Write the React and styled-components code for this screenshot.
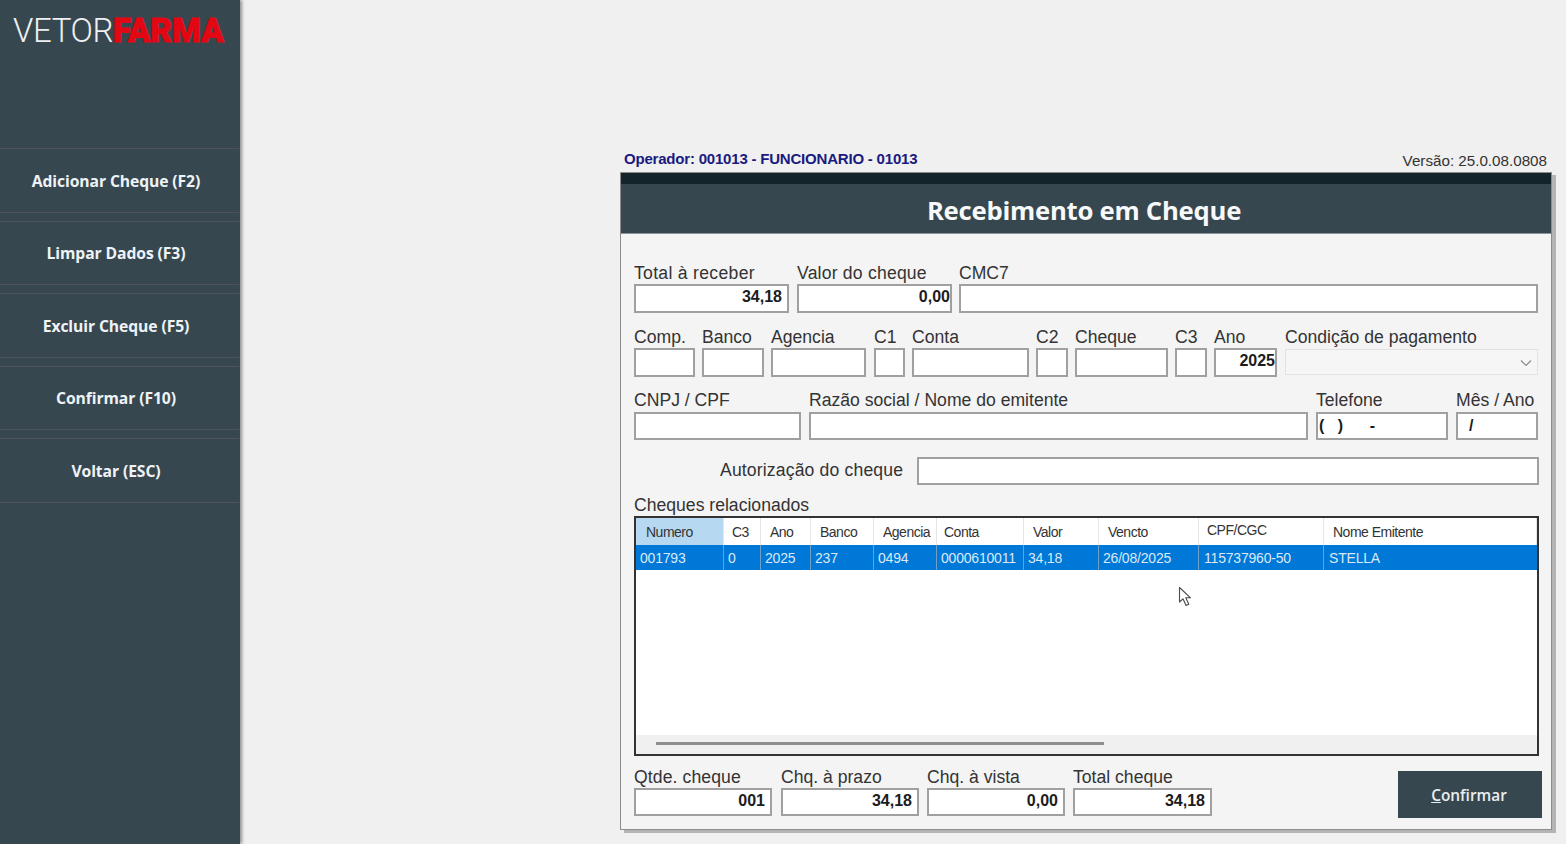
import React from 'react';
import styled, { createGlobalStyle } from 'styled-components';

const GlobalStyle = createGlobalStyle`
    html, body {
        margin: 0;
        padding: 0;
        height: 100%;
        overflow: hidden;
        background: #f0f0f0;
    }
`;

const Page = styled.div`
    position: relative;
    width: 1566px;
    height: 844px;
    overflow: hidden;
    background: #f0f0f0;
    font-family: "Liberation Sans", Arial, sans-serif;
`;

const Sidebar = styled.aside`
    position: absolute;
    left: 0;
    top: 0;
    width: 240px;
    height: 844px;
    background: #37474f;
    box-shadow: 2px 0 3px rgba(70, 70, 70, 0.55);
`;

const Logo = styled.div`
    position: absolute;
    left: 13px;
    top: 11px;
    display: flex;
    font-family: Roboto, sans-serif;
    font-size: 33px;
    line-height: 40px;
    white-space: nowrap;
`;

const LogoThin = styled.span`
    color: #eef0f1;
    font-weight: 300;
    letter-spacing: -0.4px;
`;

const LogoBold = styled.span`
    color: #e30613;
    font-weight: 900;
    letter-spacing: 0;
    -webkit-text-stroke: 1px #e30613;
`;

const SideMenu = styled.nav`
    position: absolute;
    left: 0;
    top: 148px;
    width: 239px;
    display: flex;
    flex-direction: column;
    gap: 8px;
`;

const SideButton = styled.div`
    display: flex;
    align-items: center;
    justify-content: center;
    padding: 1px 7px 0 0;
    box-sizing: border-box;
    height: 64.5px;
    border-top: 1px solid #4c5459;
    border-bottom: 1px solid #4c5459;
    color: #eef3f7;
    font-family: "Open Sans", sans-serif;
    font-size: 15.7px;
    font-weight: 700;
    letter-spacing: -0.1px;
`;

const Operator = styled.div`
    position: absolute;
    left: 624px;
    top: 150px;
    color: #1a1a80;
    font-size: 15px;
    line-height: 17px;
    font-weight: 700;
    letter-spacing: -0.2px;
`;

const Version = styled.div`
    position: absolute;
    right: 19px;
    top: 152px;
    color: #333;
    font-size: 15.2px;
    line-height: 17px;
`;

const Panel = styled.main`
    position: absolute;
    left: 620px;
    top: 172px;
    width: 932px;
    height: 658px;
    box-sizing: border-box;
    border: 1px solid #8c8c8c;
    background: #f4f4f5;
    box-shadow: 4px 3px 0 #b4b4b4;
`;

const TopBand = styled.div`
    height: 11px;
    background: #14242b;
`;

const Title = styled.h1`
    margin: 0;
    height: 50px;
    display: flex;
    align-items: center;
    justify-content: center;
    padding: 4px 4px 0 0;
    background: #37474f;
    border-bottom: 1px solid #8b9499;
    box-sizing: border-box;
    color: #f7f9fa;
    font-family: "Open Sans", sans-serif;
    font-size: 25.7px;
    font-weight: 700;
    letter-spacing: -0.25px;
`;

const Row = styled.div`
    position: absolute;
    left: 13px;
    top: ${props => props.$top}px;
    display: flex;
`;

const Field = styled.div`
    width: ${props => props.$w}px;
    margin-left: ${props => props.$ml || 0}px;
    flex: none;
`;

const Label = styled.div`
    height: 21px;
    line-height: 20px;
    color: #333;
    font-size: 17.6px;
    letter-spacing: ${props => props.$ls || 0}px;
    white-space: nowrap;
`;

const Input = styled.input`
    display: block;
    width: 100%;
    height: ${props => props.$h || 29}px;
    box-sizing: border-box;
    margin: ${props => props.$mt || 0}px 0 0;
    padding: 0 ${props => props.$pr ?? 2}px ${props => props.$pb ?? 3}px ${props => props.$pl ?? 2}px;
    border: 2px solid #a0a0a0;
    border-radius: 0;
    outline: none;
    background: #fff;
    color: #1c1c1c;
    font-family: "Liberation Sans", Arial, sans-serif;
    font-size: 16px;
    font-weight: 700;
    text-align: ${props => props.$align || 'left'};
    white-space: pre;
`;

const Combo = styled.div`
    position: relative;
    height: 26px;
    margin-top: 1px;
    box-sizing: border-box;
    border: 1px solid #e2e2e2;
    background: #f6f6f6;
`;

const ComboArrow = styled.svg`
    position: absolute;
    right: 5px;
    top: 9px;
    width: 12px;
    height: 8px;
`;

const AuthRow = styled.div`
    position: absolute;
    left: 99px;
    top: 284px;
    display: flex;
    align-items: center;
`;

const AuthLabel = styled(Label)`
    width: 197px;
    height: 28px;
    line-height: 26px;
    letter-spacing: 0.15px;
`;

const GridLabel = styled(Label)`
    position: absolute;
    left: 13px;
    top: 322px;
`;

const GridBox = styled.div`
    position: absolute;
    left: 13px;
    top: 343px;
    width: 905px;
    height: 240px;
    box-sizing: border-box;
    border: 2px solid #333;
    background: #fff;
    overflow: hidden;
`;

const GridHead = styled.div`
    display: grid;
    grid-template-columns: 88px 37px 50px 63px 63px 87px 75px 100px 125px 1fr;
    height: 27px;
    background: #fff;
`;

const HeadCell = styled.div`
    padding-left: ${props => props.$pad}px;
    padding-bottom: ${props => props.$raised ? 3 : 0}px;
    display: flex;
    align-items: center;
    box-sizing: border-box;
    background: ${props => props.$active ? '#b6d9f1' : '#fff'};
    border-right: 1px solid #e6e6e6;
    color: #333;
    font-size: 14px;
    letter-spacing: -0.5px;
    white-space: nowrap;
`;

const GridRow = styled.div`
    display: grid;
    grid-template-columns: 88px 37px 50px 63px 63px 87px 75px 100px 125px 1fr;
    height: 25px;
    background: #0078d7;
`;

const RowCell = styled.div`
    padding-left: 4px;
    display: flex;
    align-items: center;
    box-sizing: border-box;
    border-right: 1px solid #6f9fc6;
    color: #dbe9f6;
    font-size: 14px;
    letter-spacing: -0.2px;
    white-space: nowrap;
    &:nth-child(n + 9) {
        padding-left: 5px;
    }
    &:last-child {
        border-right: none;
    }
`;

const ScrollTrack = styled.div`
    position: absolute;
    left: 0;
    right: 0;
    bottom: 0;
    height: 19px;
    background: #f0f0f0;
`;

const ScrollThumb = styled.div`
    position: absolute;
    left: 20px;
    top: 7px;
    width: 448px;
    height: 3px;
    background: #8e8e8e;
`;

const ConfirmButton = styled.button`
    position: absolute;
    left: 777px;
    top: 598px;
    width: 144px;
    height: 47px;
    padding: 2px 2px 0 0;
    border: none;
    background: #37474f;
    color: #e9eef1;
    font-family: "Open Sans", sans-serif;
    font-size: 15.4px;
    font-weight: 600;
`;

const Cursor = styled.svg`
    position: absolute;
    left: 1178px;
    top: 586px;
    width: 15px;
    height: 21px;
`;

const menu = ['Adicionar Cheque (F2)', 'Limpar Dados (F3)', 'Excluir Cheque (F5)', 'Confirmar (F10)', 'Voltar (ESC)'];

const row1 = [
    { label: 'Total à receber', ls: 0.3, w: 155, value: '34,18', align: 'right', pr: 5 },
    { label: 'Valor do cheque', ls: 0.2, w: 155, ml: 8, value: '0,00', align: 'right', pr: 0 },
    { label: 'CMC7', w: 579, ml: 7 },
];

const row2 = [
    { label: 'Comp.', w: 61 },
    { label: 'Banco', w: 62, ml: 7 },
    { label: 'Agencia', w: 95, ml: 7 },
    { label: 'C1', w: 31, ml: 8 },
    { label: 'Conta', w: 117, ml: 7 },
    { label: 'C2', w: 32, ml: 7 },
    { label: 'Cheque', w: 93, ml: 7 },
    { label: 'C3', w: 32, ml: 7 },
    { label: 'Ano', w: 63, ml: 7, value: '2025', align: 'right', pr: 0 },
];

const row3 = [
    { label: 'CNPJ / CPF', w: 167 },
    { label: 'Razão social / Nome do emitente', w: 499, ml: 8 },
    { label: 'Telefone', w: 132, ml: 8, value: '(   )      -', pl: 1, pb: 1 },
    { label: 'Mês / Ano', w: 82, ml: 8, value: '  /', pl: 2, pb: 1 },
];

const totals = [
    { label: 'Qtde. cheque', ls: 0.1, w: 138, value: '001', align: 'right', pr: 5 },
    { label: 'Chq. à prazo', w: 138, ml: 9, value: '34,18', align: 'right', pr: 5 },
    { label: 'Chq. à vista', w: 138, ml: 8, value: '0,00', align: 'right', pr: 5 },
    { label: 'Total cheque', w: 139, ml: 8, value: '34,18', align: 'right', pr: 5 },
];

const headers = [
    { text: 'Numero', pad: 10, active: true },
    { text: 'C3', pad: 8 },
    { text: 'Ano', pad: 9 },
    { text: 'Banco', pad: 9 },
    { text: 'Agencia', pad: 9 },
    { text: 'Conta', pad: 7 },
    { text: 'Valor', pad: 9 },
    { text: 'Vencto', pad: 9 },
    { text: 'CPF/CGC', pad: 8, raised: true },
    { text: 'Nome Emitente', pad: 9 },
];

const cheque = ['001793', '0', '2025', '237', '0494', '0000610011', '34,18', '26/08/2025', '115737960-50', 'STELLA'];

const renderFields = (fields, height, inputTop) => fields.map(f => (
    <Field key={f.label} $w={f.w} $ml={f.ml}>
        <Label $ls={f.ls}>{f.label}</Label>
        <Input readOnly value={f.value || ''} $align={f.align} $pr={f.pr} $pl={f.pl} $pb={f.pb} $h={height} $mt={inputTop} />
    </Field>
));

const App = () => (
    <Page>
        <GlobalStyle />
        <Sidebar>
            <Logo>
                <LogoThin>VETOR</LogoThin>
                <LogoBold>FARMA</LogoBold>
            </Logo>
            <SideMenu>
                {menu.map(item => <SideButton key={item}>{item}</SideButton>)}
            </SideMenu>
        </Sidebar>

        <Operator>Operador: 001013 - FUNCIONARIO - 01013</Operator>
        <Version>Versão: 25.0.08.0808</Version>

        <Panel>
            <TopBand />
            <Title>Recebimento em Cheque</Title>

            <Row $top={90}>{renderFields(row1)}</Row>
            <Row $top={154}>
                {renderFields(row2)}
                <Field $w={253} $ml={8}>
                    <Label>Condição de pagamento</Label>
                    <Combo>
                        <ComboArrow viewBox="0 0 12 8">
                            <path d="M1 1.5 L6 6.5 L11 1.5" fill="none" stroke="#8a8a8a" strokeWidth="1.2" />
                        </ComboArrow>
                    </Combo>
                </Field>
            </Row>
            <Row $top={217}>{renderFields(row3, 28, 1)}</Row>

            <AuthRow>
                <AuthLabel>Autorização do cheque</AuthLabel>
                <Field $w={622}>
                    <Input readOnly value="" $h={28} />
                </Field>
            </AuthRow>

            <GridLabel>Cheques relacionados</GridLabel>
            <GridBox>
                <GridHead>
                    {headers.map(h => (
                        <HeadCell key={h.text} $pad={h.pad} $active={h.active} $raised={h.raised}>{h.text}</HeadCell>
                    ))}
                </GridHead>
                <GridRow>
                    {cheque.map(c => <RowCell key={c}>{c}</RowCell>)}
                </GridRow>
                <ScrollTrack>
                    <ScrollThumb />
                </ScrollTrack>
            </GridBox>

            <Row $top={594}>{renderFields(totals, 28)}</Row>
            <ConfirmButton><u>C</u>onfirmar</ConfirmButton>
        </Panel>

        <Cursor viewBox="0 0 15 21">
            <path d="M1.5 1.5 L1.5 16 L5 12.8 L8 19.5 L10.8 18.2 L7.8 11.8 L12.5 11.8 Z" fill="#fff" stroke="#4a4a4a" strokeWidth="1.1" strokeLinejoin="round" />
        </Cursor>
    </Page>
);

export default App;
